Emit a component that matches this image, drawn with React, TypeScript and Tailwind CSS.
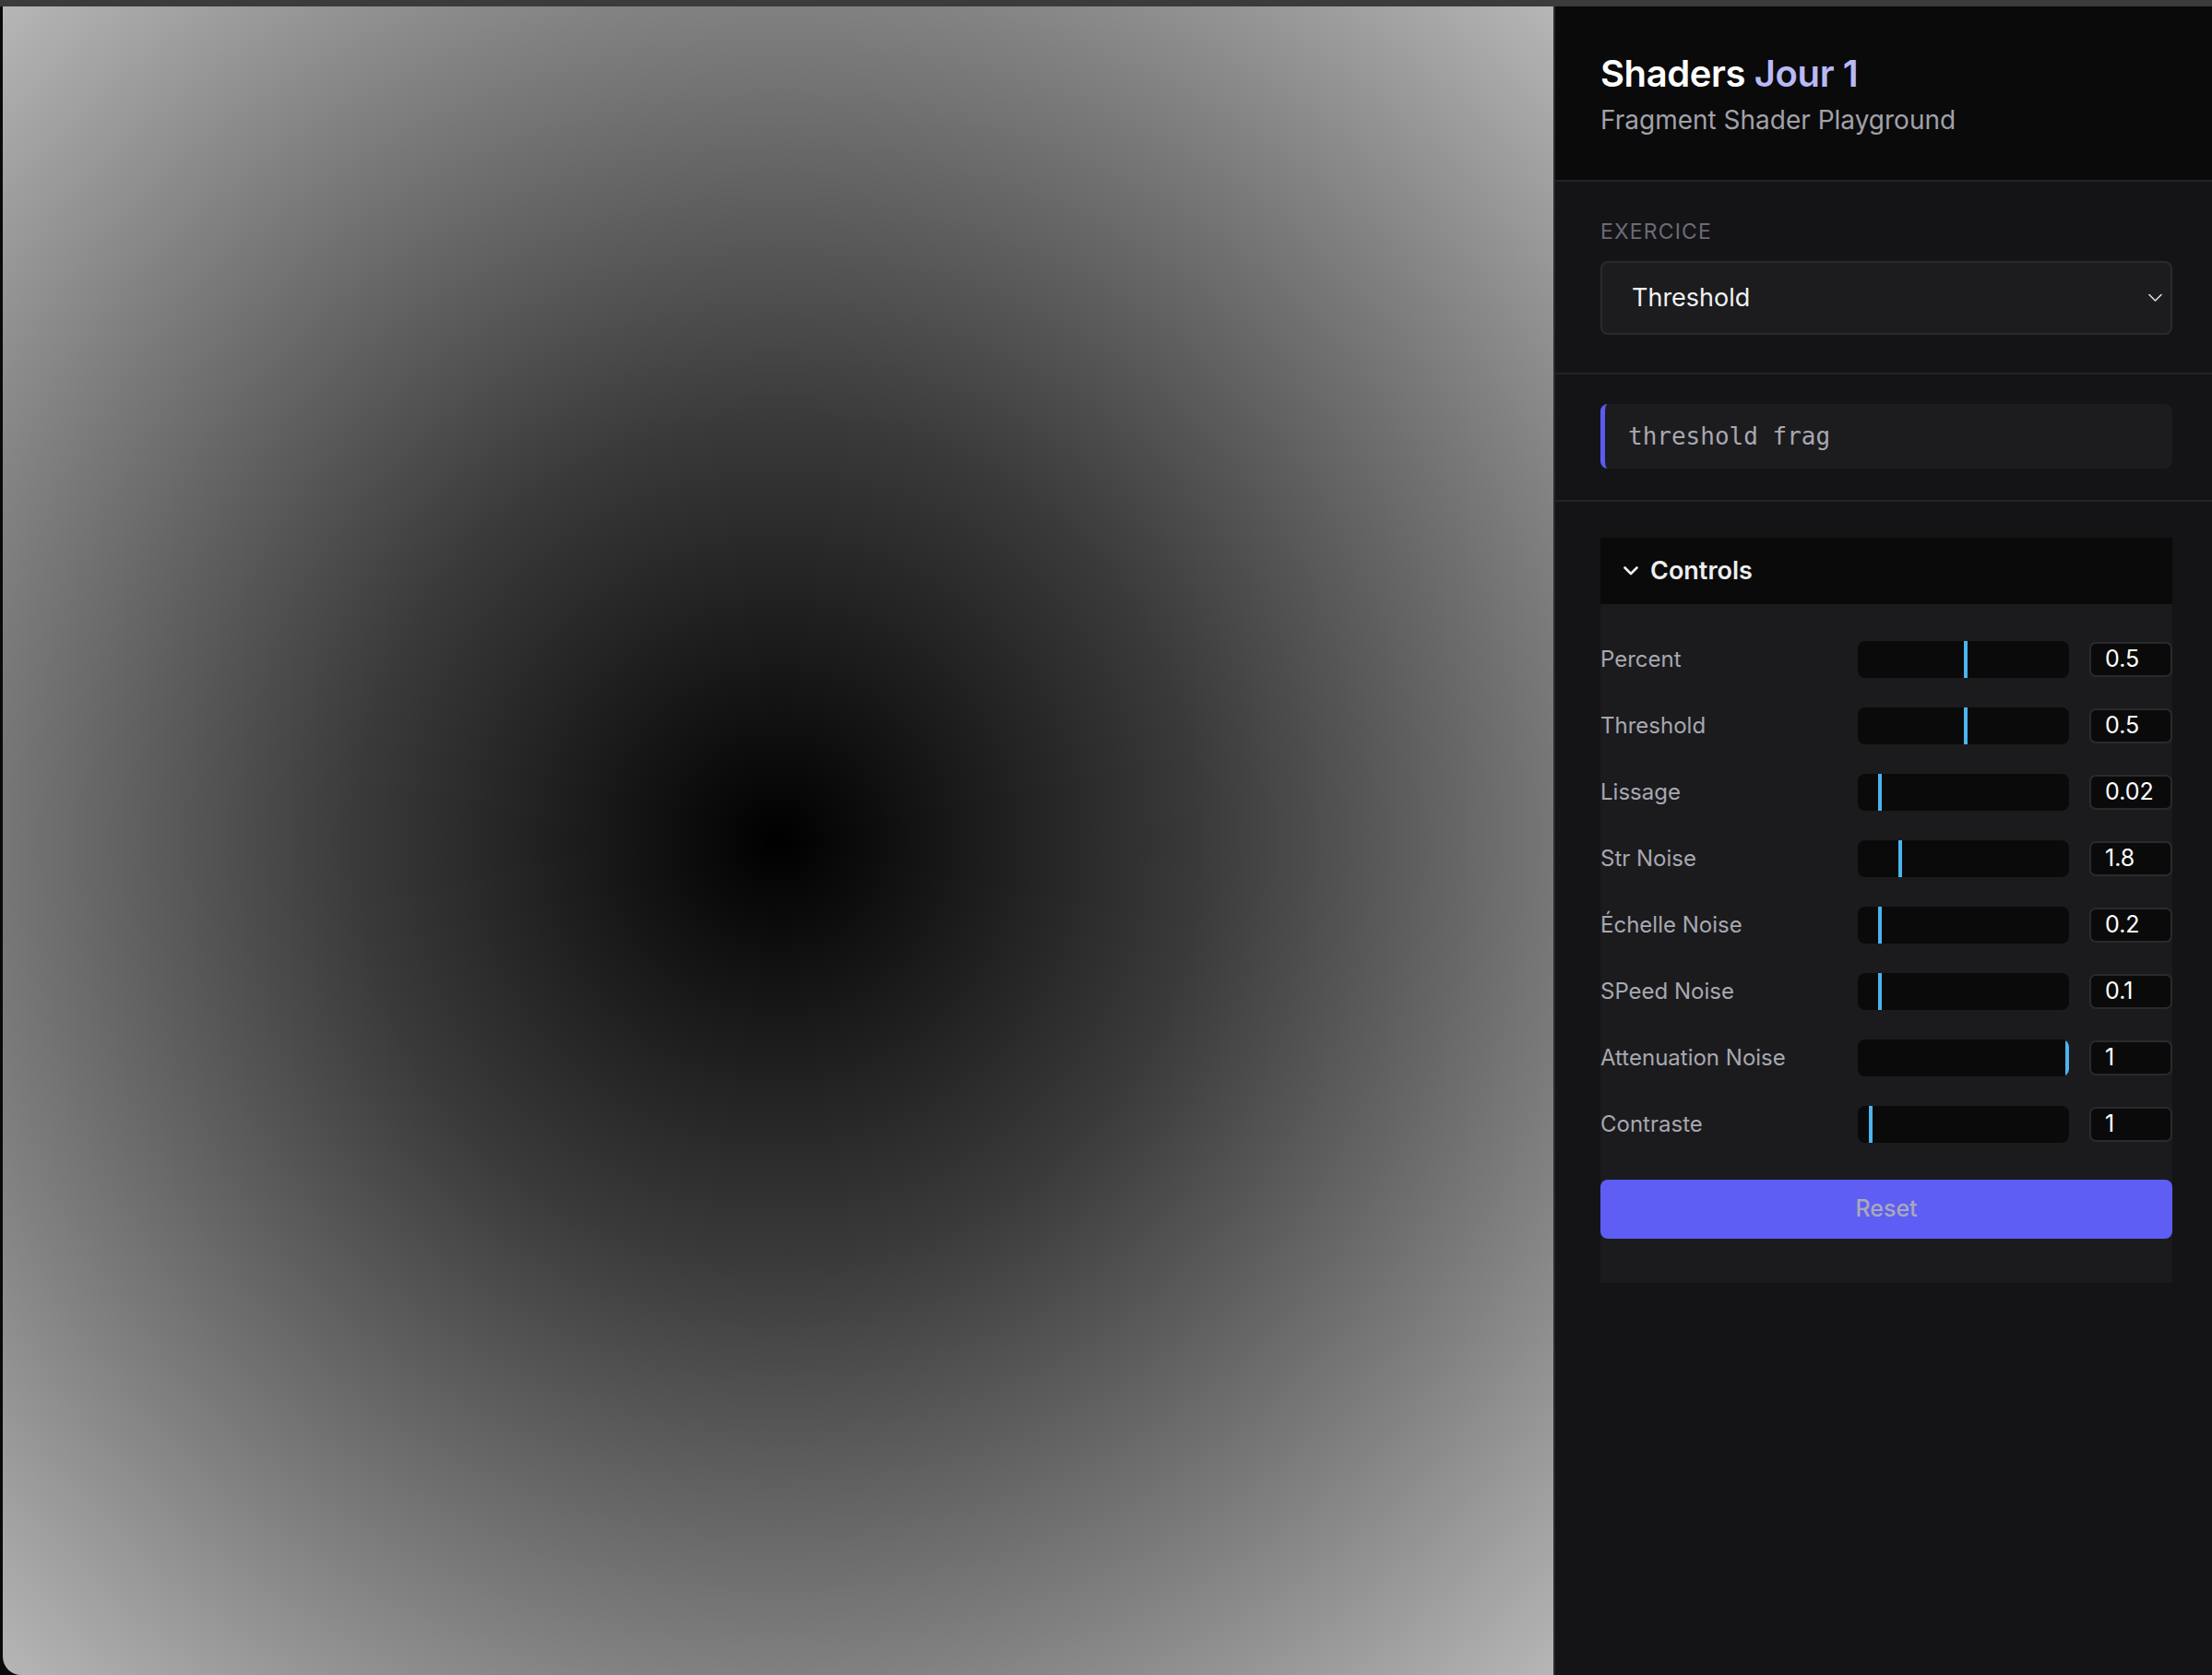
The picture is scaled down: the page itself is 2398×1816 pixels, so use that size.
import React from 'react';

const controls = [
  { label: 'Percent', value: '0.5', pos: 115 },
  { label: 'Threshold', value: '0.5', pos: 115 },
  { label: 'Lissage', value: '0.02', pos: 22 },
  { label: 'Str Noise', value: '1.8', pos: 44 },
  { label: 'Échelle Noise', value: '0.2', pos: 22 },
  { label: 'SPeed Noise', value: '0.1', pos: 22 },
  { label: 'Attenuation Noise', value: '1', pos: 225 },
  { label: 'Contraste', value: '1', pos: 12 },
];

function ChevronDown({ className }: { className?: string }) {
  return (
    <svg viewBox="0 0 16 10" fill="none" className={className}>
      <path d="M1.5 1.5 L8 8 L14.5 1.5" stroke="currentColor" strokeLinecap="round" strokeLinejoin="round" />
    </svg>
  );
}

export default function App() {
  return (
    <div className="h-[1816px] w-[2398px] bg-[#0a0a0a] flex flex-col overflow-hidden font-['Inter',sans-serif]">
      {/* window top strip */}
      <div className="h-[7px] shrink-0 bg-[#3b3b3b]"></div>

      <div className="flex flex-1 min-h-0 pl-[3px]">
        {/* shader canvas */}
        <div className="w-[1681px] shrink-0 rounded-bl-[20px] bg-[radial-gradient(circle_at_50%_50%,#000000_0%,#3a3a3a_37%,#808080_73%,#b6b6b6_100%)]"></div>

        {/* sidebar */}
        <aside className="w-[714px] shrink-0 border-l-2 border-[#2a2a2c] bg-[#141416] flex flex-col">
          {/* header */}
          <div className="bg-[#0a0a0a] border-b-2 border-[#232326] pl-[49px] pr-[43px] py-[49px] flex flex-col gap-[10px]">
            <h1 className="text-[40px] leading-[48px] font-semibold tracking-[-0.01em] text-white">
              Shaders <span className="text-[#b9b9f6]">Jour 1</span>
            </h1>
            <p className="text-[28px] leading-[32px] text-[#a1a1aa]">Fragment Shader Playground</p>
          </div>

          {/* exercice select */}
          <div className="border-b-2 border-[#232326] pl-[49px] pr-[43px] pt-[40px] pb-[41px]">
            <div className="text-[23px] leading-[28px] tracking-[0.05em] text-[#6b6b76] uppercase">Exercice</div>
            <div className="mt-[18px] h-[80px] rounded-[8px] border-2 border-[#2a2a2e] bg-[#1c1c1f] flex items-center justify-between pl-[32px] pr-[8px]">
              <span className="text-[27px] text-[#f2f2f2]">Threshold</span>
              <ChevronDown className="w-[17px] h-[10px] text-[#dddddd] [stroke-width:1.6]" />
            </div>
          </div>

          {/* fragment name */}
          <div className="border-b-2 border-[#232326] pl-[49px] pr-[43px] pt-[32px] pb-[34px]">
            <div className="h-[70px] rounded-[8px] border-l-[5px] border-[#5b5bf0] bg-[#1c1c1f] flex items-center pl-[25px]">
              <span className="font-['DejaVu_Sans_Mono',monospace] text-[26px] text-[#a8a8b0]">threshold frag</span>
            </div>
          </div>

          {/* controls panel */}
          <div className="pl-[49px] pr-[43px] pt-[39px]">
            <div className="bg-[#1b1b1e]">
              <div className="h-[72px] bg-[#0a0a0a] flex items-center pl-[25px] gap-[13px]">
                <ChevronDown className="w-[16px] h-[10px] text-[#eeeeee] [stroke-width:2.6]" />
                <span className="text-[27px] font-semibold text-[#eeeeee]">Controls</span>
              </div>

              <div className="pt-[24px] pb-[48px]">
                {controls.map((c) => (
                  <div key={c.label} className="h-[72px] flex items-center">
                    <span className="flex-1 text-[24px] text-[#a8a8b0]">{c.label}</span>
                    <div className="relative w-[229px] h-[40px] rounded-[8px] bg-[#0a0a0a] overflow-hidden">
                      <div className="absolute top-0 h-full w-[4px] bg-[#4cb4ee]" style={{ left: c.pos }}></div>
                    </div>
                    <div className="ml-[22px] w-[90px] h-[38px] rounded-[7px] border-2 border-[#2a2a2e] bg-[#0a0a0a] flex items-center pl-[15px]">
                      <span className="text-[25px] text-white">{c.value}</span>
                    </div>
                  </div>
                ))}

                <button className="mt-[24px] w-full h-[64px] rounded-[8px] bg-[#5e5ef5] text-[25px] font-medium text-[#a9a9b8]">
                  Reset
                </button>
              </div>
            </div>
          </div>
        </aside>
      </div>
    </div>
  );
}
